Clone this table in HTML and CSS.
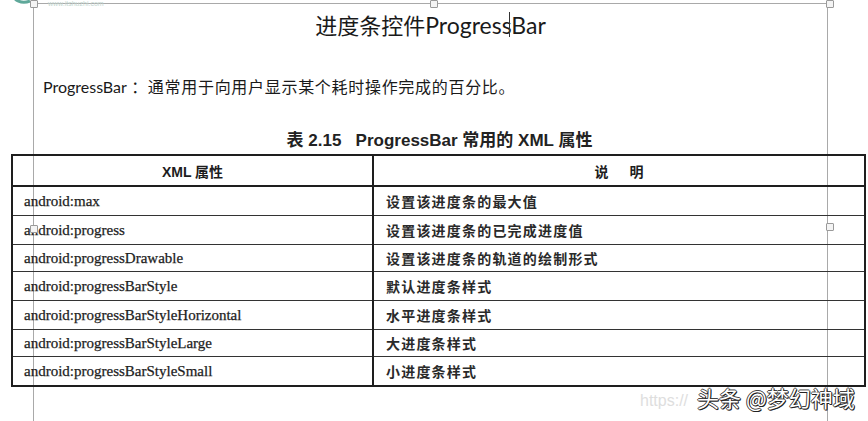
FILE: index.html
```html
<!DOCTYPE html>
<html lang="zh-CN">
<head>
<meta charset="utf-8">
<title>进度条控件ProgressBar</title>
<link rel="stylesheet" href="styles.css">
</head>
<body>
<div class="screen">
  <div class="logo">
    <svg width="22" height="8" viewBox="0 0 22 8"><path d="M3 -4 C3 4 12 7 20 4" fill="none" stroke="#5fa89a" stroke-width="3"/></svg>
    <span class="logo-text">www.itshuzhi.com</span>
  </div>
  <div class="doc">
    <h1 class="title"><span class="cjk">进度条控件</span>ProgressBar</h1>
    <p class="intro"><span class="latin">ProgressBar</span> ：通常用于向用户显示某个耗时操作完成的百分比。</p>
    <div class="figure">
      <div class="caption">表 2.15&nbsp;&nbsp;&nbsp;ProgressBar 常用的 XML 属性</div>
      <table class="attrs">
        <colgroup><col class="c1"><col class="c2"></colgroup>
        <thead>
          <tr><th>XML 属性</th><th>说&emsp;&ensp;明</th></tr>
        </thead>
        <tbody>
          <tr><td>android:max</td><td>设置该进度条的最大值</td></tr>
          <tr><td>android:progress</td><td>设置该进度条的已完成进度值</td></tr>
          <tr class="short"><td>android:progressDrawable</td><td>设置该进度条的轨道的绘制形式</td></tr>
          <tr><td>android:progressBarStyle</td><td>默认进度条样式</td></tr>
          <tr><td>android:progressBarStyleHorizontal</td><td>水平进度条样式</td></tr>
          <tr class="short"><td>android:progressBarStyleLarge</td><td>大进度条样式</td></tr>
          <tr><td>android:progressBarStyleSmall</td><td>小进度条样式</td></tr>
        </tbody>
      </table>
    </div>
  </div>
  <span class="handle h-tl"></span>
  <span class="handle h-tm"></span>
  <span class="handle h-tr"></span>
  <span class="handle h-ml"></span>
  <span class="handle h-mr"></span>
  <span class="caret"></span>
  <div class="url">https://</div>
  <div class="mark">头条 @梦幻神域</div>
</div>
</body>
</html>
```
FILE: styles.css
```css
html, body {
  margin: 0;
  padding: 0;
  background: #ffffff;
}
.screen {
  position: relative;
  width: 868px;
  height: 421px;
  overflow: hidden;
  background: #fff;
}
.doc {
  margin-left: 33px;
  margin-top: 3px;
  width: 795px;
  height: 418px;
  border-left: 1px solid #a9a9a9;
  border-right: 1px solid #a9a9a9;
  border-top: 1px solid #a9a9a9;
  box-sizing: border-box;
  padding-top: 5px;
}
.title {
  margin: 0;
  text-align: center;
  font-weight: normal;
  font-size: 23px;
  line-height: 30px;
  color: #1a1a1a;
  font-family: "Lato", "Open Sans", sans-serif;
}
.title .cjk {
  font-family: "Noto Sans CJK SC", sans-serif;
  font-weight: 400;
  font-size: 22px;
}
.intro {
  margin: 34px 0 0 9px;
  font-family: "Noto Sans CJK SC", sans-serif;
  font-size: 16px;
  line-height: 24px;
  letter-spacing: 0.7px;
  color: #1a1a1a;
}
.intro .latin {
  font-family: "Lato", "Open Sans", sans-serif;
  letter-spacing: 0;
  font-size: 16px;
}
.figure {
  margin-left: -23px;
  width: 855px;
  margin-top: 30px;
}
.caption {
  text-align: center;
  font-family: "Liberation Sans", "Noto Sans CJK SC", sans-serif;
  font-weight: bold;
  font-size: 17px;
  line-height: 24px;
  color: #222;
  margin-bottom: 1px;
  padding-left: 2px;
}
.attrs {
  width: 855px;
  border-collapse: collapse;
  border: 2px solid #1e1e1e;
  table-layout: fixed;
}
.attrs col.c1 { width: 361px; }
.attrs th, .attrs td {
  border: 1px solid #333;
  padding: 0 0 0 11px;
  text-align: left;
  color: #1d1d1d;
  height: 28px;
}
.attrs thead th {
  height: 29px;
  border-bottom: 2px solid #1e1e1e;
  text-align: center;
  padding: 0;
  font-family: "Liberation Sans", "Noto Sans CJK SC", sans-serif;
  font-weight: bold;
  font-size: 14px;
}
.attrs tr.short td { height: 26px; }
.attrs td:first-child {
  font-family: "Liberation Serif", serif;
  font-size: 15px;
  -webkit-text-stroke: 0.25px #1d1d1d;
}
.attrs td:last-child {
  font-family: "Noto Sans CJK SC", sans-serif;
  font-size: 14px;
  font-weight: 700;
  color: #2a2a2a;
  letter-spacing: 1.2px;
  padding-left: 12px;
}
.attrs th:first-child { border-right: 2px solid #1e1e1e; }
.attrs td:first-child { border-right: 2px solid #1e1e1e; }
.handle {
  position: absolute;
  width: 6px;
  height: 6px;
  border: 1px solid #9a9a9a;
  background: #f4f4f4;
  border-radius: 1px;
}
.h-tl { left: 30px; top: 0; }
.h-tm { left: 430px; top: 0; }
.h-tr { left: 826px; top: 0; }
.h-ml { left: 30px; top: 225px; }
.h-mr { left: 826px; top: 223px; }
.caret {
  position: absolute;
  left: 509px;
  top: 12px;
  width: 1px;
  height: 25px;
  background: #333;
}
.logo {
  position: absolute;
  left: 10px;
  top: -3px;
  display: flex;
  align-items: flex-start;
  gap: 16px;
}
.logo-text {
  font-family: "Liberation Sans", sans-serif;
  font-size: 7px;
  color: #c3d5cf;
  line-height: 8px;
  padding-top: 3px;
}
.url {
  position: absolute;
  left: 640px;
  top: 392px;
  font-family: "Liberation Sans", sans-serif;
  font-size: 16px;
  color: #dedede;
  white-space: nowrap;
}
.mark {
  position: absolute;
  left: 697px;
  top: 383px;
  font-family: "Noto Sans CJK SC", sans-serif;
  font-size: 22px;
  line-height: 28px;
  color: #ffffff;
  white-space: nowrap;
  text-shadow: 1px 1px 0 #222, -1px 0 0 #444, 0 -1px 0 #444, 1px 0 0 #333, 0 1px 0 #333;
}
```
